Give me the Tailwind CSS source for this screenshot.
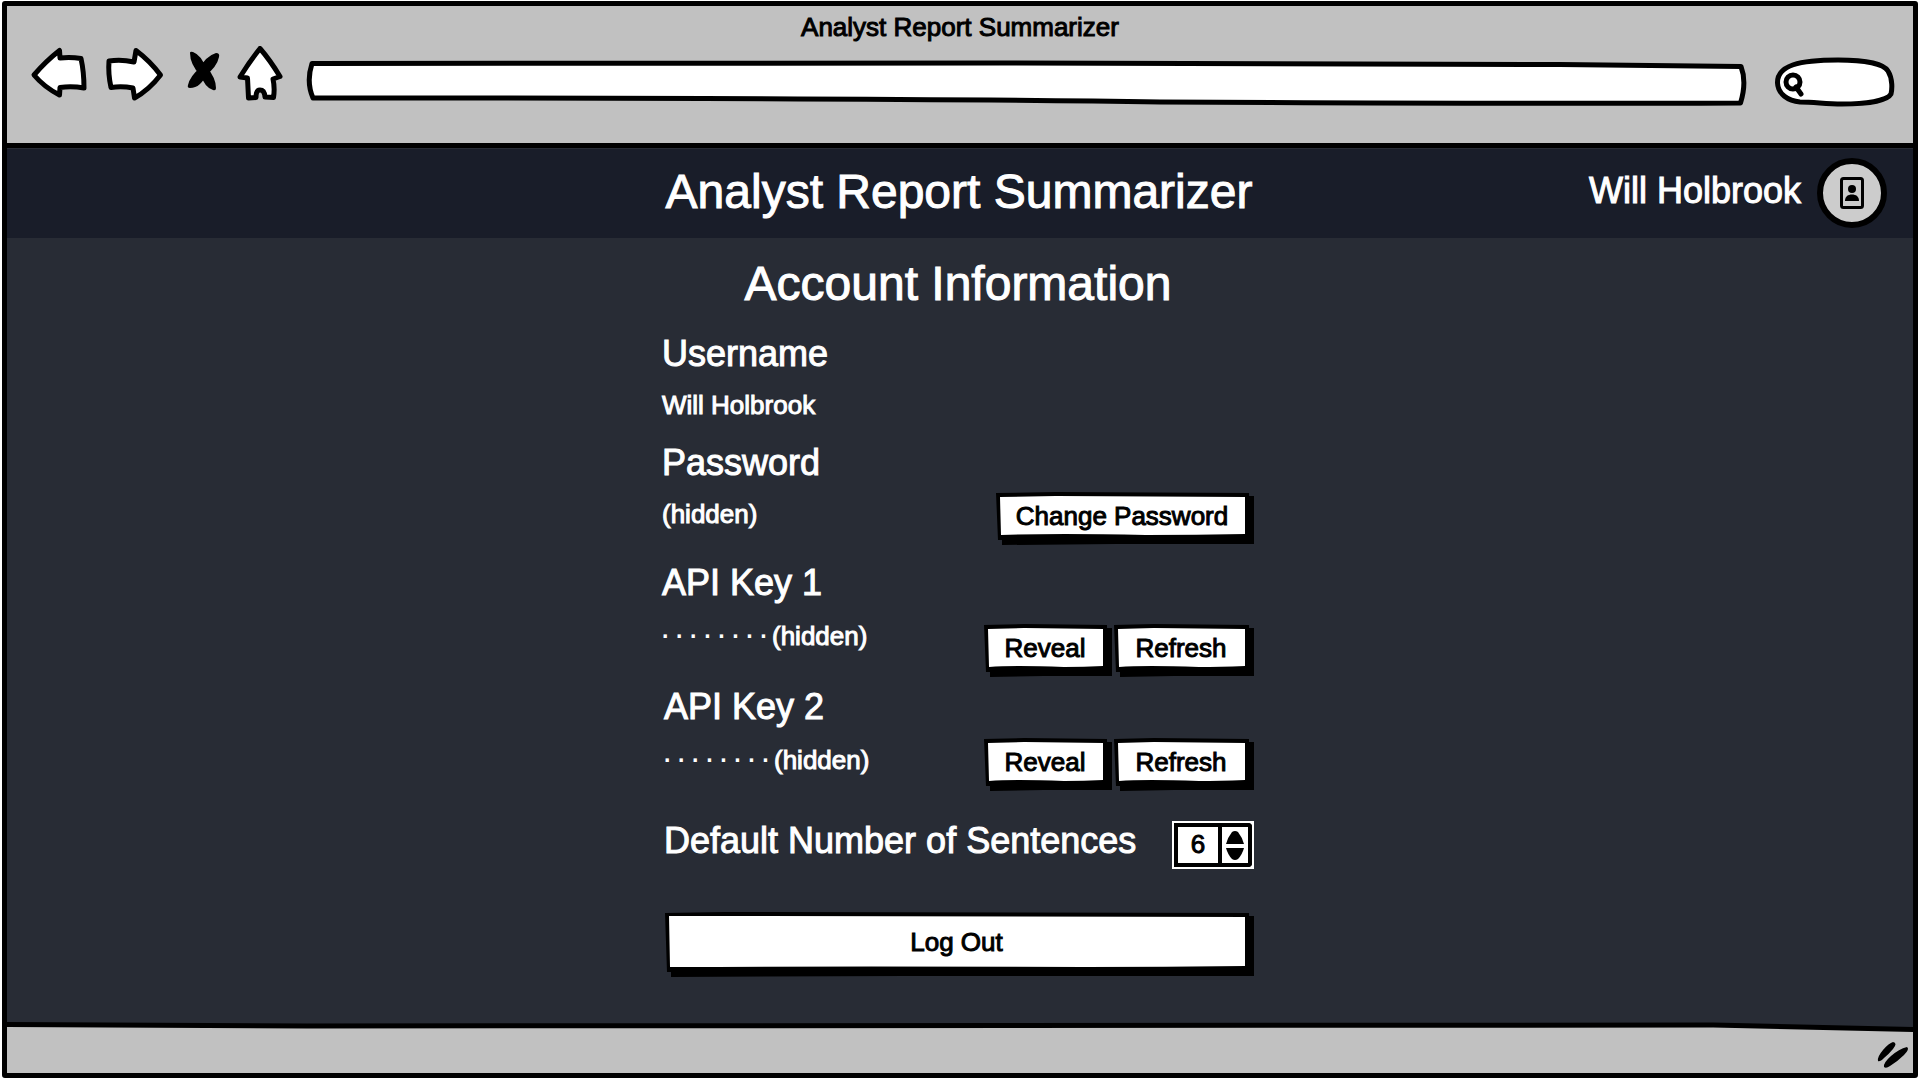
<!DOCTYPE html>
<html lang="en">
<head>
<meta charset="utf-8">
<meta name="viewport" content="width=device-width, initial-scale=1">
<title>Analyst Report Summarizer</title>
<script src="https://cdn.jsdelivr.net/npm/@tailwindcss/browser@4"></script>
</head>
<body class="flex min-h-screen flex-col bg-white px-0.5 pt-px pb-0.5 font-['Liberation_Sans',Arial,sans-serif] text-[26px] leading-8 [-webkit-text-stroke:1px_currentcolor]">
<div class="flex grow flex-col rounded-[3px] border-5 border-black bg-[#282c35]">

  <!-- Browser chrome -->
  <header class="border-b-5 border-black bg-[#c1c1c1] pt-[5px] pb-[35px] text-black">
    <p class="text-center">Analyst Report Summarizer</p>
    <div class="mt-[3px] flex gap-[14px] pr-[17px] pl-[23px]">
      <button type="button" aria-label="Back" class="shrink-0">
        <svg class="block h-[62px] w-[60px]" viewBox="30 46 60 62" fill="#fff" stroke="#000" stroke-width="5" stroke-linejoin="round"><path d="M34 75Q46 61 59.500 50.500L60 58Q71 57 81 58.500Q84 72 84 88Q72 86 60 87.500L59.500 95Q44 87 34 75Z"/></svg>
      </button>
      <button type="button" aria-label="Forward" class="shrink-0">
        <svg class="block h-[62px] w-[60px]" viewBox="104 46 60 62" fill="#fff" stroke="#000" stroke-width="5" stroke-linejoin="round"><path d="M109 61Q121 59 134 62L136 50.500Q150 61 160.500 75Q149 90 134.500 98L133 88Q122 86 111 87.500Q108 74 109 61Z"/></svg>
      </button>
      <button type="button" aria-label="Stop" class="shrink-0">
        <svg class="block h-[62px] w-[44px]" viewBox="178 46 44 62"><path d="M200 75Q190 64 190 53Q190 51 193 52Q201 55 206 68ZM199 69Q206 56 216 53Q220 53 219 57Q217 67 205 76ZM199 68L206 66Q216 78 216 88Q216 91 213 90Q205 88 199 72ZM201 67L207 73Q201 88 190 88Q187 88 188 85Q190 76 201 67Z"/></svg>
      </button>
      <button type="button" aria-label="Home" class="shrink-0">
        <svg class="block h-[62px] w-[56px]" viewBox="236 46 56 62" fill="#fff" stroke="#000" stroke-width="5" stroke-linejoin="round"><path d="M240 77Q250 61 260 48.500Q270 60 280 76.500L273 79Q275 88 273.500 97.500L265 97Q264.500 90 260 90Q256 90 256 97.500L248.500 98L247.500 78Z"/></svg>
      </button>
      <div class="relative grow">
        <svg class="absolute inset-0 h-full w-full" viewBox="306 46 1442 62" preserveAspectRatio="none" fill="#fff" stroke="#000" stroke-width="5" stroke-linejoin="round"><path vector-effect="non-scaling-stroke" d="M312 63.500L1000 63L1560 64.500L1741 66.500Q1747 82 1740.500 103Q1500 104 1160 102Q900 98 313 98Q306 82 312 63.500Z"/></svg>
        <input type="url" aria-label="Address" class="relative h-full w-full bg-transparent px-4 outline-none">
      </div>
      <div class="relative w-[134px] shrink-0">
        <svg class="absolute inset-0 h-full w-full" viewBox="1762 46 134 62" fill="#fff" stroke="#000" stroke-width="5" stroke-linejoin="round" stroke-linecap="round"><path d="M1777.500 83C1777 65 1800 60 1838 60C1865 60 1884 64 1888 71C1893 79 1892 90 1891 94C1887 101 1865 104 1842 104C1825 104 1815 102 1800 102C1788 101 1778 94 1777.500 83Z"/><circle cx="1793" cy="82" r="7"/><path d="M1796 87L1801 94"/></svg>
        <input type="search" aria-label="Search" class="relative h-full w-full bg-transparent pr-4 pl-11 outline-none">
      </div>
    </div>
  </header>

  <!-- Application bar -->
  <nav class="mt-px grid min-h-[89px] grid-cols-[1fr_auto_1fr] items-center bg-[#191d29] pr-0.5 text-white">
    <h1 class="col-start-2 pb-1 text-5xl leading-14">Analyst Report Summarizer</h1>
    <a href="#account" class="flex items-center justify-end gap-4 pr-6">
      <span class="pb-1.5 text-4xl leading-10">Will Holbrook</span>
      <svg class="mb-0.5 h-[70px] w-[70px]" viewBox="0 0 70 70" aria-hidden="true"><circle cx="35" cy="35" r="32" fill="#ccc" stroke="#000" stroke-width="6"/><rect x="24.500" y="20.500" width="21" height="29" rx="2" fill="none" stroke="#000" stroke-width="3"/><circle cx="35" cy="31" r="4"/><path d="M28 43C28 38.500 31 36.500 35 36.500S42 38.500 42 43Z"/></svg>
    </a>
  </nav>

  <main id="account" class="grow pt-[18px] pr-1 pb-11 text-white">
    <div class="mx-auto w-full max-w-[592px]">
      <h2 class="text-center text-5xl leading-14">Account Information</h2>

      <h3 class="mt-[22px] text-4xl leading-10">Username</h3>
      <p class="mt-[15px]">Will Holbrook</p>

      <h3 class="mt-[22px] text-4xl leading-10">Password</h3>
      <div class="mt-[9px] flex items-start justify-between">
        <p class="pt-[6px]">(hidden)</p>
        <button type="button" class="relative h-[53px] w-[258px] pb-1.5 text-black">
          <svg class="absolute inset-0 h-full w-full" viewBox="0 0 258 53" preserveAspectRatio="none"><path d="M0 1L60 0L253 1V4H258V52L120 52L6 53V48H2Z"/><path fill="#fff" d="M4 5L60 4L249 5V42Q200 43 150 43Q60 41 5 43Z"/></svg>
          <span class="relative pr-1.5">Change Password</span>
        </button>
      </div>

      <h3 class="mt-[18px] text-4xl leading-10">API Key 1</h3>
      <div class="mt-[17px] flex items-start justify-between">
        <p class="flex"><span class="w-[110px] text-[23px] font-bold [-webkit-text-stroke:0]">· · · · · · · ·</span>(hidden)</p>
        <div class="mt-1 flex gap-0.5">
          <button type="button" class="relative h-[53px] w-[128px] pb-1.5 text-black">
            <svg class="absolute inset-0 h-full w-full" viewBox="0 0 128 53" preserveAspectRatio="none"><path d="M0 1L40 0L123 1V4H128V52L60 52L6 53V48H2Z"/><path fill="#fff" d="M4 5L40 4L119 5V42Q100 43 80 43Q30 41 5 43Z"/></svg>
            <span class="relative pr-1.5">Reveal</span>
          </button>
          <button type="button" class="relative h-[53px] w-[140px] pb-1.5 text-black">
            <svg class="absolute inset-0 h-full w-full" viewBox="0 0 140 53" preserveAspectRatio="none"><path d="M0 1L40 0L135 1V4H140V52L60 52L6 53V48H2Z"/><path fill="#fff" d="M4 5L40 4L131 5V42Q105 43 85 43Q30 41 5 43Z"/></svg>
            <span class="relative pr-1.5">Refresh</span>
          </button>
        </div>
      </div>

      <h3 class="mt-[10px] pl-0.5 text-4xl leading-10">API Key 2</h3>
      <div class="mt-[11px] flex items-start justify-between">
        <p class="flex pt-[6px] pl-0.5"><span class="w-[110px] text-[23px] font-bold [-webkit-text-stroke:0]">· · · · · · · ·</span>(hidden)</p>
        <div class="flex gap-0.5">
          <button type="button" class="relative h-[53px] w-[128px] pb-1.5 text-black">
            <svg class="absolute inset-0 h-full w-full" viewBox="0 0 128 53" preserveAspectRatio="none"><path d="M0 1L40 0L123 1V4H128V52L60 52L6 53V48H2Z"/><path fill="#fff" d="M4 5L40 4L119 5V42Q100 43 80 43Q30 41 5 43Z"/></svg>
            <span class="relative pr-1.5">Reveal</span>
          </button>
          <button type="button" class="relative h-[53px] w-[140px] pb-1.5 text-black">
            <svg class="absolute inset-0 h-full w-full" viewBox="0 0 140 53" preserveAspectRatio="none"><path d="M0 1L40 0L135 1V4H140V52L60 52L6 53V48H2Z"/><path fill="#fff" d="M4 5L40 4L131 5V42Q105 43 85 43Q30 41 5 43Z"/></svg>
            <span class="relative pr-1.5">Refresh</span>
          </button>
        </div>
      </div>

      <div class="mt-[30px] flex items-start justify-between">
        <label for="sentences" class="pl-0.5 text-4xl leading-10">Default Number of Sentences</label>
        <div class="flex h-12 w-[82px] border border-white bg-white p-px text-black">
          <input id="sentences" type="number" value="6" class="w-[48px] [appearance:textfield] border-4 border-black bg-white pb-0.5 text-center outline-none [&::-webkit-inner-spin-button]:appearance-none">
          <div class="flex grow flex-col items-center justify-center gap-1 rounded-r-[4px] border-4 border-l-0 border-black">
            <button type="button" aria-label="More"><svg class="block h-[13px] w-[18px]" viewBox="0 0 18 13"><path d="M0 13Q2 6 6 1Q9 -1 12 1Q16 6 18 13Z"/></svg></button>
            <button type="button" aria-label="Fewer"><svg class="block h-[12px] w-[18px]" viewBox="0 0 18 12"><path d="M0 0H18Q16 7 12 11Q9 13 6 11Q2 7 0 0Z"/></svg></button>
          </div>
        </div>
      </div>

      <div class="mt-[43px] flex pl-[3px]">
        <button type="button" class="relative h-[65px] grow pb-1.5 text-black">
          <svg class="absolute inset-0 h-full w-full" viewBox="0 0 589 65" preserveAspectRatio="none"><path d="M0 1L60 0L584 1V4H589V64L240 64L6 65V60H2Z"/><path fill="#fff" d="M4 4L60 4L580 5V54Q500 55 420 55Q200 54 5 55Z"/></svg>
          <span class="relative pr-1.5">Log Out</span>
        </button>
      </div>
    </div>
  </main>

  <!-- Status bar -->
  <footer class="relative flex h-[51px] justify-end bg-[#c1c1c1]">
    <svg class="absolute inset-x-0 top-0 h-[11px] w-full" viewBox="0 0 1906 11" preserveAspectRatio="none" aria-hidden="true"><path fill="#282c35" d="M0 0H1906V8L1706 2L0 2Z"/><path d="M0 0L300 1.500L1000 1L1706 0.500L1906 5V10L1706 5.500L1000 6L300 6.500L0 5Z"/></svg>
    <svg class="relative mt-5 mr-0.5 h-7 w-9" viewBox="0 0 36 28" aria-hidden="true"><path d="M3 19Q2 15 8 8T18 0Q23 1 18 7T9 16Q5 20 3 19ZM9 25Q8 21 16 14T32 5Q35 7 29 13T15 24Q11 27 9 25Z"/></svg>
  </footer>
</div>
</body>
</html>
